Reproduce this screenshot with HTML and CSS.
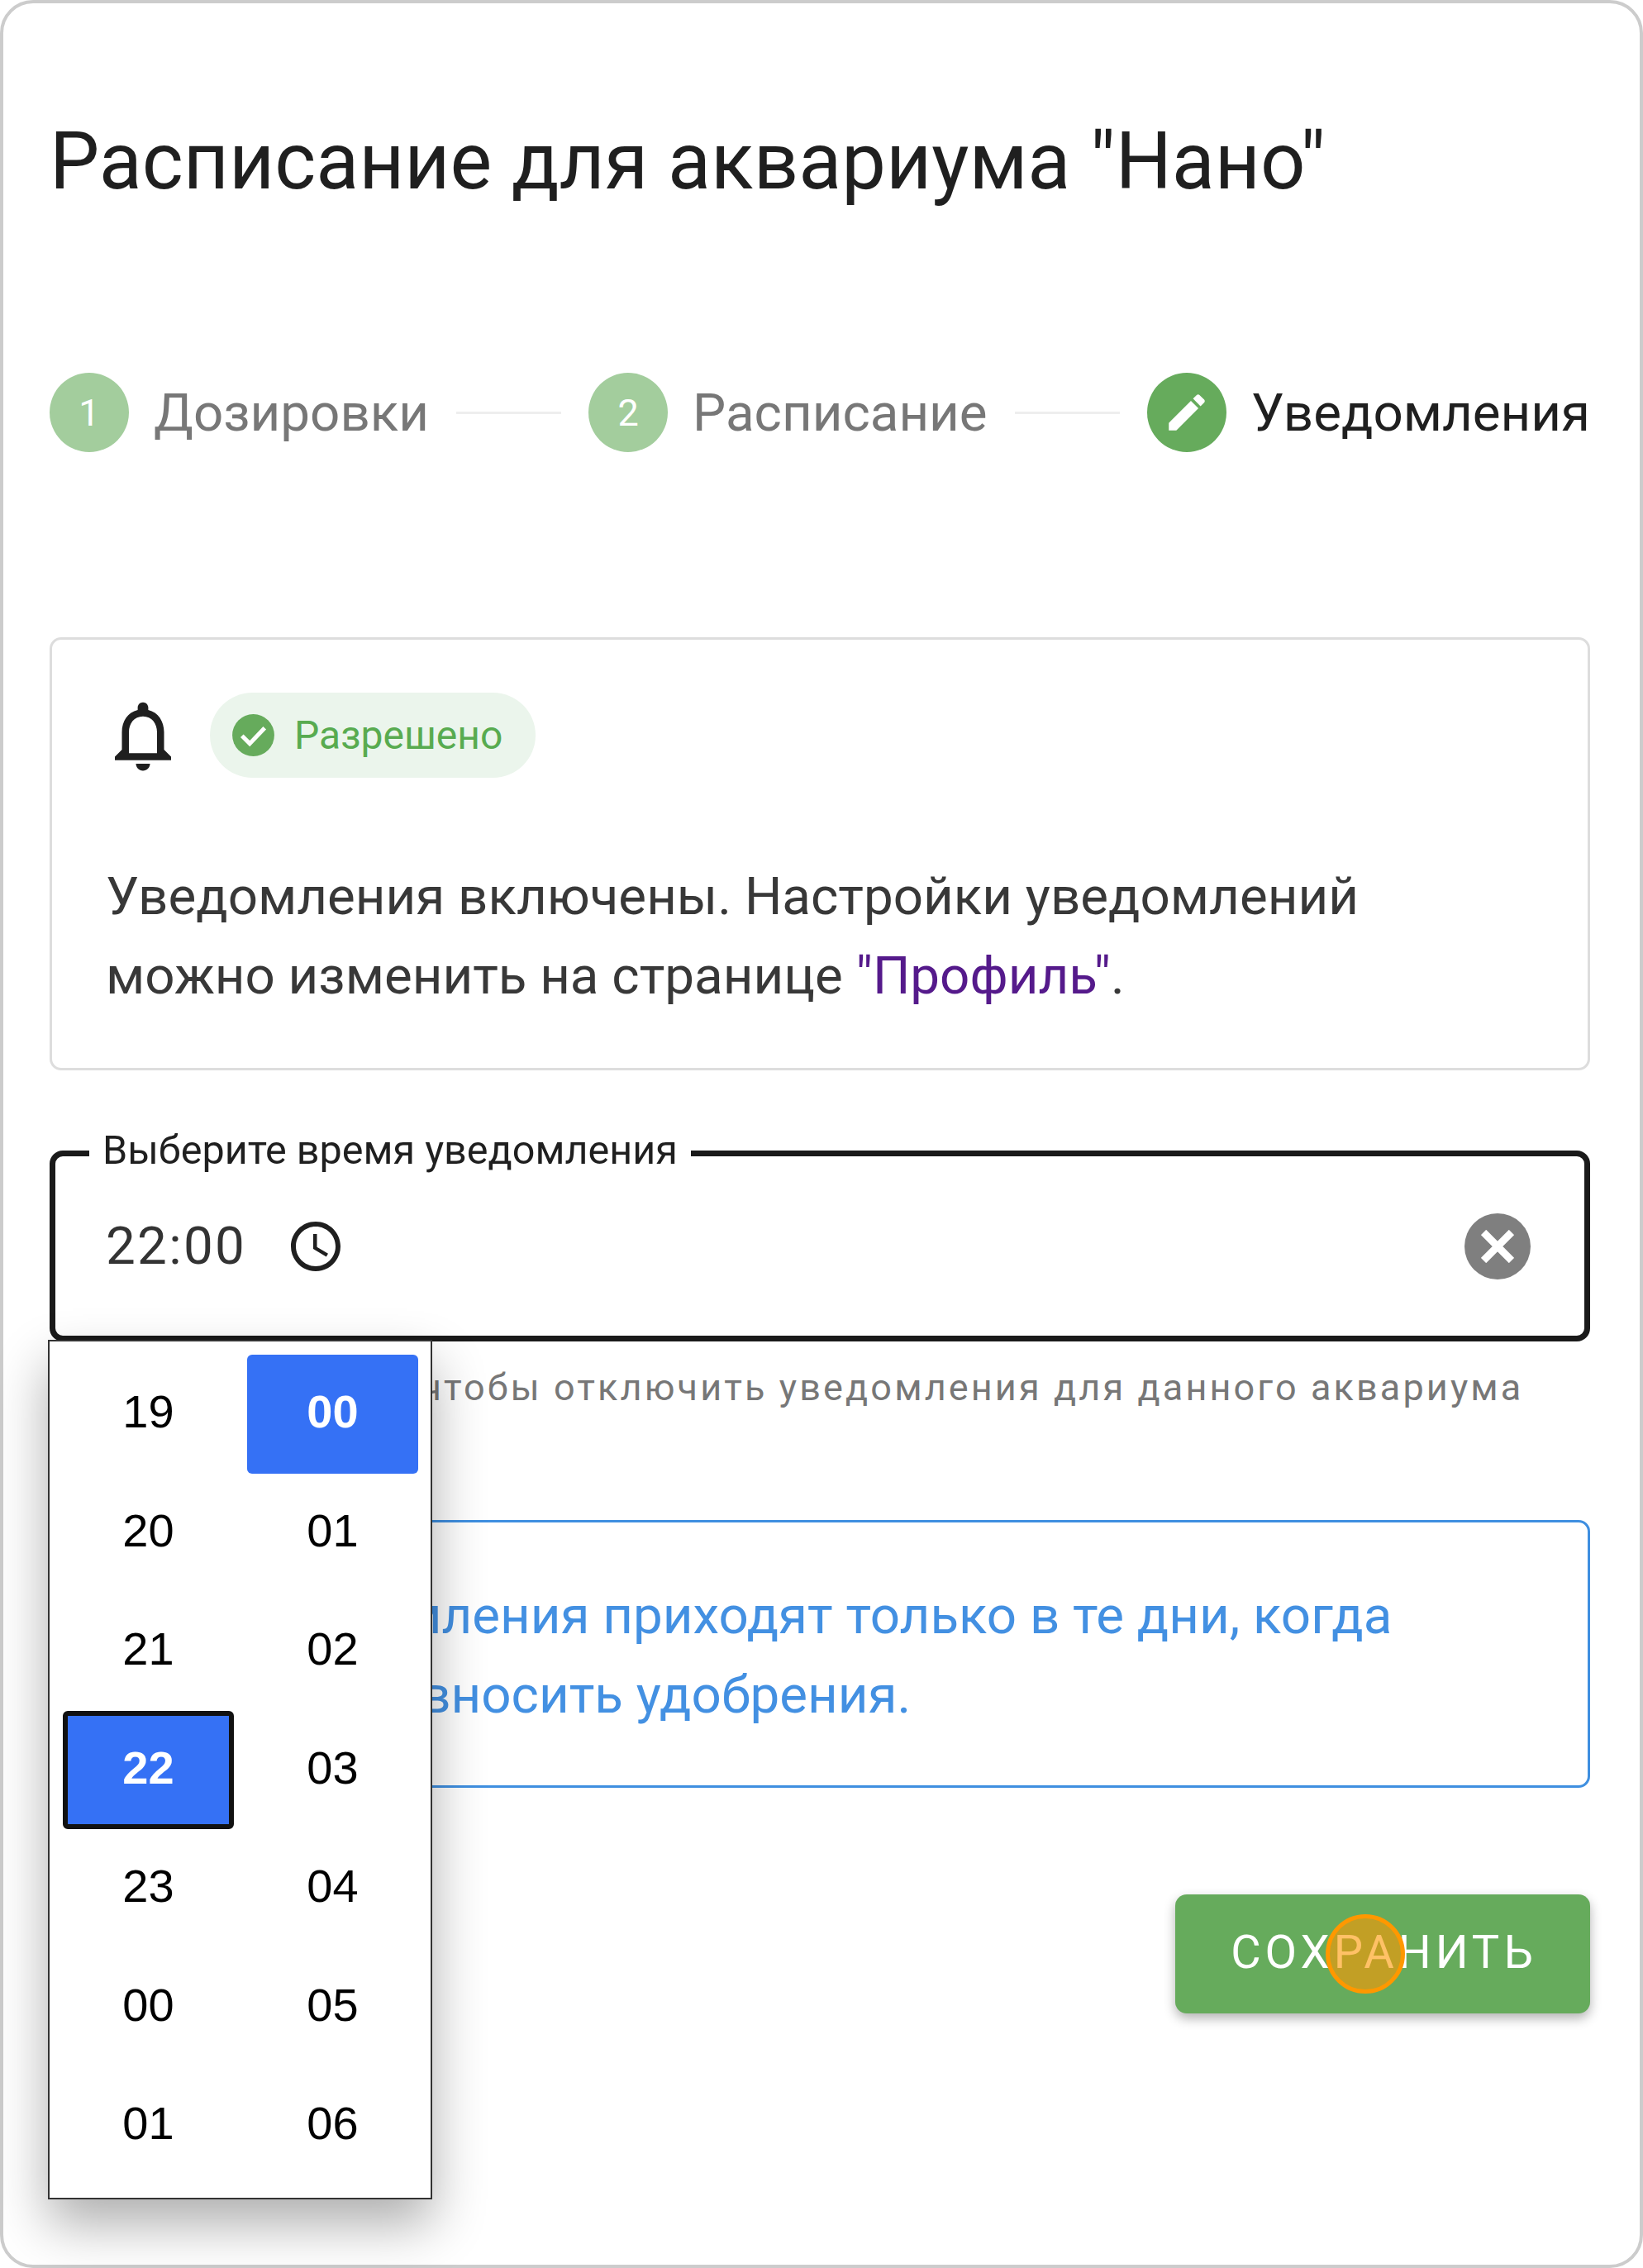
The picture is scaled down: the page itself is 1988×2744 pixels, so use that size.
FILE: index.html
```html
<!DOCTYPE html>
<html lang="ru">
	<head>
		<meta charset="utf-8" />
		<title>Расписание</title>
		<link rel="stylesheet" href="styles.css">
	</head>
	<body>
		<div class="card">
			<h1 class="title">Расписание для аквариума "Нано"</h1>

			<div class="stepper">
				<span class="step-icon step-icon-done">1</span>
				<span class="step-label step-label-done">Дозировки</span>
				<span class="step-line"></span>
				<span class="step-icon step-icon-done">2</span>
				<span class="step-label step-label-done">Расписание</span>
				<span class="step-line"></span>
				<span class="step-icon">
					<svg class="pen-icon" viewBox="0 0 24 24"><path d="M3 17.25V21h3.75L17.81 9.94l-3.75-3.75L3 17.25zM20.71 7.04c.39-.39.39-1.02 0-1.41l-2.34-2.34c-.39-.39-1.02-.39-1.41 0l-1.83 1.83 3.75 3.75 1.83-1.83z"/></svg>
				</span>
				<span class="step-label">Уведомления</span>
			</div>

			<div class="info-box">
				<div class="info-head">
					<svg class="bell-icon" viewBox="0 0 24 24"><path d="M12 22c1.1 0 2-.9 2-2h-4c0 1.1.9 2 2 2zm6-6v-5c0-3.07-1.63-5.64-4.5-6.32V4c0-.83-.67-1.5-1.5-1.5s-1.5.67-1.5 1.5v.68C7.64 5.36 6 7.92 6 11v5l-2 2v1h16v-1l-2-2zm-2 1H8v-6c0-2.48 1.51-4.5 4-4.5s4 2.02 4 4.5v6z"/></svg>
					<span class="chip">
						<svg class="chip-icon" viewBox="0 0 24 24"><circle cx="12" cy="12" r="10"/><path class="chip-check" d="M6.6 12.3l3.7 3.7 7.1-7.4"/></svg>
						Разрешено
					</span>
				</div>
				<p class="text">Уведомления включены. Настройки уведомлений<br>можно изменить на странице <a class="link" href="#">"Профиль"</a>.</p>
			</div>

			<div class="time-field">
				<label class="time-label">Выберите время уведомления</label>
				<span class="time-value">22:00</span>
				<svg class="clock-icon" viewBox="0 0 24 24"><path d="M11.99 2C6.47 2 2 6.48 2 12s4.47 10 9.99 10C17.52 22 22 17.52 22 12S17.52 2 11.99 2zM12 20c-4.42 0-8-3.58-8-8s3.58-8 8-8 8 3.58 8 8-3.58 8-8 8zm.5-13H11v6l5.25 3.15.75-1.23-4.5-2.67z"/></svg>
				<span class="clear-icon">
					<svg viewBox="0 0 40 40"><path d="M3 3l34 34M37 3L3 37"/></svg>
				</span>

				<div class="time-popup">
					<span class="time-cell">19</span><span class="time-cell time-cell-on">00</span>
					<span class="time-cell">20</span><span class="time-cell">01</span>
					<span class="time-cell">21</span><span class="time-cell">02</span>
					<span class="time-cell time-cell-on time-cell-focus">22</span><span class="time-cell">03</span>
					<span class="time-cell">23</span><span class="time-cell">04</span>
					<span class="time-cell">00</span><span class="time-cell">05</span>
					<span class="time-cell">01</span><span class="time-cell">06</span>
				</div>
			</div>
			<p class="helper">Очистите поле, чтобы отключить уведомления для данного аквариума</p>

			<div class="alert">Наши уведомления приходят только в те дни, когда<br>необходимо вносить удобрения.</div>

			<div class="actions">
				<button class="save-button" type="button">Сохранить<span class="touch-dot"></span></button>
			</div>
		</div>
	</body>
</html>
```

FILE: styles.css
```css
* { box-sizing: border-box; }
body { margin: 0; background-color: #ffffff; font-family: Roboto, "Liberation Sans", sans-serif; color: #1f1f1f; }

.card {
	height: 2744px;
	padding: 134px 60px 0 56px;
	border: 4px solid #cccccc;
	border-radius: 40px;
	background-color: #ffffff;
}
.title { margin: 0; font-size: 95.6px; font-weight: 400; line-height: 114px; }

.stepper { display: flex; align-items: center; margin-top: 199px; height: 96px; }
.step-icon {
	display: flex;
	flex: none;
	align-items: center;
	justify-content: center;
	width: 96px;
	height: 96px;
	border-radius: 50%;
	background-color: #66ab5c;
	color: #ffffff;
	font-size: 45px;
}
.step-icon-done { background-color: #a3cd9d; }
.pen-icon { width: 58px; height: 58px; fill: #ffffff; }
.step-label { margin-left: 30px; font-size: 63.7px; white-space: nowrap; }
.step-label-done { color: #777777; }
.step-line { flex: 1; height: 3px; margin: 0 33px; background-color: #eeeeee; }

.info-box {
	margin-top: 224px;
	height: 524px;
	padding: 64px 65px 0 65px;
	border: 3px solid #dddddd;
	border-radius: 14px;
}
.info-head { display: flex; align-items: center; }
.bell-icon { width: 102px; height: 102px; margin-left: -6px; margin-right: 30px; fill: #1f1f1f; }
.chip {
	display: flex;
	align-items: center;
	height: 103px;
	padding: 0 40px 0 22px;
	border-radius: 52px;
	background-color: #ebf5ec;
	color: #58ab50;
	font-size: 48px;
}
.chip-icon { width: 61px; height: 61px; margin-right: 19px; fill: #66ab5c; }
.chip-check { fill: none; stroke: #ffffff; stroke-width: 2; }
.text { margin: 96px 0 0 0; font-size: 63.7px; line-height: 96px; color: #383838; }
.link { color: #551a8b; text-decoration: none; }

.time-field {
	position: relative;
	display: flex;
	align-items: center;
	margin-top: 97px;
	height: 231px;
	padding: 0 65px 0 61px;
	border: 7px solid #1a1a1a;
	border-radius: 16px;
}
.time-label {
	position: absolute;
	top: -34px;
	left: 41px;
	padding: 0 16px;
	background-color: #ffffff;
	font-size: 48.5px;
	line-height: 54px;
	white-space: nowrap;
}
.time-value { font-size: 63.7px; letter-spacing: 2.3px; color: #333333; }
.clock-icon { width: 72px; height: 72px; margin-left: 48px; fill: #1f1f1f; }
.clear-icon {
	display: flex;
	align-items: center;
	justify-content: center;
	width: 80px;
	height: 80px;
	margin-left: auto;
	border-radius: 50%;
	background-color: #7f7f7f;
}
.clear-icon svg { width: 40px; height: 40px; stroke: #ffffff; stroke-width: 9; fill: none; }

.time-popup {
	position: absolute;
	z-index: 2;
	top: 100%;
	left: -9px;
	display: grid;
	grid-template-columns: 207px 207px;
	grid-auto-rows: 143.5px;
	column-gap: 16px;
	width: 465px;
	height: 1040px;
	padding: 16px 16px;
	margin-top: 5px;
	border: 2px solid #333333;
	background-color: #ffffff;
	box-shadow: 0 30px 60px rgba(0, 0, 0, 0.32);
	font-family: "Liberation Sans", Arial, sans-serif;
	font-size: 56px;
	color: #000000;
}
.time-cell { display: flex; align-items: center; justify-content: center; padding-bottom: 6px; border-radius: 6px; }
.time-cell-on { background-color: #3571f5; color: #ffffff; font-weight: 700; }
.time-cell-focus { border: 6px solid #111111; }

.helper { margin: 23px 0 0 74px; font-size: 45px; line-height: 66px; letter-spacing: 3.12px; color: #777777; white-space: nowrap; }

.alert {
	margin-top: 127px;
	height: 324px;
	padding: 65px 65px 0 65px;
	border: 3px solid #3f8fe0;
	border-radius: 14px;
	font-size: 63.7px;
	line-height: 96px;
	color: #4390e2;
}

.actions { display: flex; justify-content: flex-end; margin-top: 129px; }
.save-button {
	position: relative;
	width: 502px;
	height: 144px;
	padding: 0 0 4px 3px;
	border: none;
	border-radius: 14px;
	background-color: #66ab5c;
	box-shadow: 0 6px 14px rgba(0, 0, 0, 0.3);
	color: #ffffff;
	font-family: Roboto, sans-serif;
	font-size: 56px;
	letter-spacing: 5px;
	text-transform: uppercase;
}
.touch-dot {
	position: absolute;
	top: 24px;
	left: 182px;
	width: 96px;
	height: 96px;
	border: 5px solid #ff9800;
	border-radius: 50%;
	background-color: rgba(255, 152, 0, 0.6);
}
```
